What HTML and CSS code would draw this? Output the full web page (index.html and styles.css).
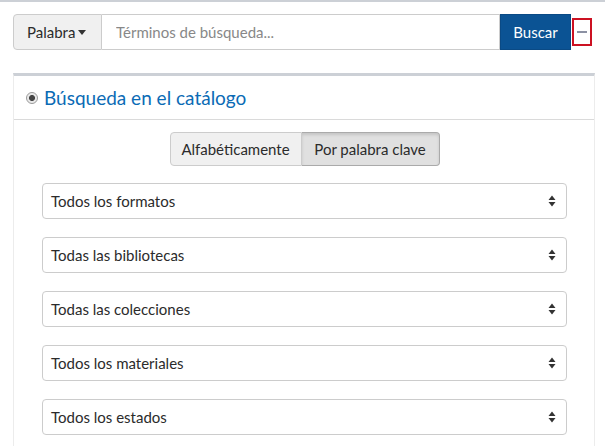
FILE: index.html
```html
<!DOCTYPE html>
<html lang="es">
<head>
<meta charset="utf-8">
<title>Búsqueda</title>
<link rel="stylesheet" href="styles.css">
</head>
<body>
<div class="page">
  <div class="search-row">
    <button class="type-btn">Palabra <span class="caret"></span></button>
    <input class="terms" type="text" placeholder="Términos de búsqueda...">
    <button class="go-btn">Buscar</button>
    <span class="collapse"><span class="minus"></span></span>
  </div>

  <div class="panel">
    <div class="panel-head">
      <span class="radio"><span class="dot"></span></span>
      <h2 class="panel-title">Búsqueda en el catálogo</h2>
    </div>
    <div class="panel-body">
      <div class="toggle">
        <button class="toggle-btn">Alfabéticamente</button>
        <button class="toggle-btn active">Por palabra clave</button>
      </div>
      <div class="selects">
        <div class="select"><span>Todos los formatos</span><svg class="arrows" width="8" height="12" viewBox="0 0 8 12"><path d="M4 0.5 L7.5 5 H0.5 Z M4 11.5 L7.5 7 H0.5 Z" fill="#333"/></svg></div>
        <div class="select"><span>Todas las bibliotecas</span><svg class="arrows" width="8" height="12" viewBox="0 0 8 12"><path d="M4 0.5 L7.5 5 H0.5 Z M4 11.5 L7.5 7 H0.5 Z" fill="#333"/></svg></div>
        <div class="select"><span>Todas las colecciones</span><svg class="arrows" width="8" height="12" viewBox="0 0 8 12"><path d="M4 0.5 L7.5 5 H0.5 Z M4 11.5 L7.5 7 H0.5 Z" fill="#333"/></svg></div>
        <div class="select"><span>Todos los materiales</span><svg class="arrows" width="8" height="12" viewBox="0 0 8 12"><path d="M4 0.5 L7.5 5 H0.5 Z M4 11.5 L7.5 7 H0.5 Z" fill="#333"/></svg></div>
        <div class="select"><span>Todos los estados</span><svg class="arrows" width="8" height="12" viewBox="0 0 8 12"><path d="M4 0.5 L7.5 5 H0.5 Z M4 11.5 L7.5 7 H0.5 Z" fill="#333"/></svg></div>
      </div>
    </div>
  </div>
</div>
</body>
</html>
```

FILE: styles.css
```css
* { box-sizing: border-box; }
html, body { margin: 0; padding: 0; background: #fff; }
body {
  font-family: Lato, "Open Sans", sans-serif;
  font-size: 15px;
  color: #2b2b2b;
  overflow: hidden;
}
.page {
  border-top: 2px solid #ccd0d6;
  padding: 12px 13px 0 13px;
}
.search-row {
  display: flex;
  align-items: center;
  height: 36px;
}
.type-btn {
  height: 36px;
  width: 89px;
  padding: 0 0 0 13px;
  display: flex;
  align-items: center;
  gap: 3px;
  background: #f0f0f0;
  border: 1px solid #ccc;
  border-radius: 4px 0 0 4px;
  font: inherit;
  color: #2b2b2b;
  white-space: nowrap;
}
.caret {
  width: 0; height: 0;
  border-left: 4.5px solid transparent;
  border-right: 4.5px solid transparent;
  border-top: 5px solid #333;
  margin-top: 1px;
}
.terms {
  flex: 1;
  height: 36px;
  border: 1px solid #ccc;
  border-left: 0;
  padding: 0 14px;
  font: inherit;
  color: #333;
  outline: none;
}
.terms::placeholder { color: #888; }
.go-btn {
  height: 36px;
  width: 71px;
  background: #0b5394;
  border: 1px solid #0a4a85;
  color: #fff;
  font: inherit;
  padding: 0;
}
.collapse {
  width: 20px;
  height: 28px;
  margin-left: 1px;
  border: 2px solid #cc1122;
  display: flex;
  align-items: center;
  justify-content: center;
}
.minus {
  width: 10px;
  height: 2px;
  background: #8c91a3;
}
.panel {
  margin-top: 23px;
  border-top: 3px solid #ccd0d6;
  border-left: 1px solid #ececec;
  border-right: 1px solid #ececec;
  width: 582px;
  height: 373px;
}
.panel-head {
  height: 44px;
  display: flex;
  align-items: center;
  padding-left: 12px;
  gap: 6px;
  border-bottom: 1px solid #dadada;
}
.radio {
  width: 12px;
  height: 12px;
  border-radius: 50%;
  border: 1px solid #999;
  background: radial-gradient(circle, #444 0 2.6px, #e6e6e6 3.4px, #f6f6f6 100%);
}
.dot { display: none; }
.panel-title {
  margin: 0;
  font-size: 19px;
  font-weight: 400;
  color: #0b6bb5;
  padding-bottom: 1px;
}
.panel-body {
  padding: 12px 27px 0 28px;
}
.toggle {
  display: flex;
  justify-content: center;
}
.toggle-btn {
  height: 34px;
  padding: 0;
  background: #f0f0f0;
  border: 1px solid #ccc;
  font: inherit;
  color: #2b2b2b;
  white-space: nowrap;
}
.toggle-btn:first-child { border-radius: 4px 0 0 4px; width: 132px; }
.toggle-btn.active {
  border-radius: 0 4px 4px 0;
  border-left: 0;
  width: 138px;
  background: #e0e0e0;
  border-color: #aaa;
  box-shadow: inset 0 2px 3px rgba(0,0,0,0.12);
}
.selects {
  margin-top: 17px;
  display: flex;
  flex-direction: column;
  gap: 18px;
}
.select {
  height: 36px;
  border: 1px solid #ccc;
  border-radius: 4px;
  display: flex;
  align-items: center;
  justify-content: space-between;
  padding: 0 10px 0 8px;
}
.arrows { display: block; }
```
